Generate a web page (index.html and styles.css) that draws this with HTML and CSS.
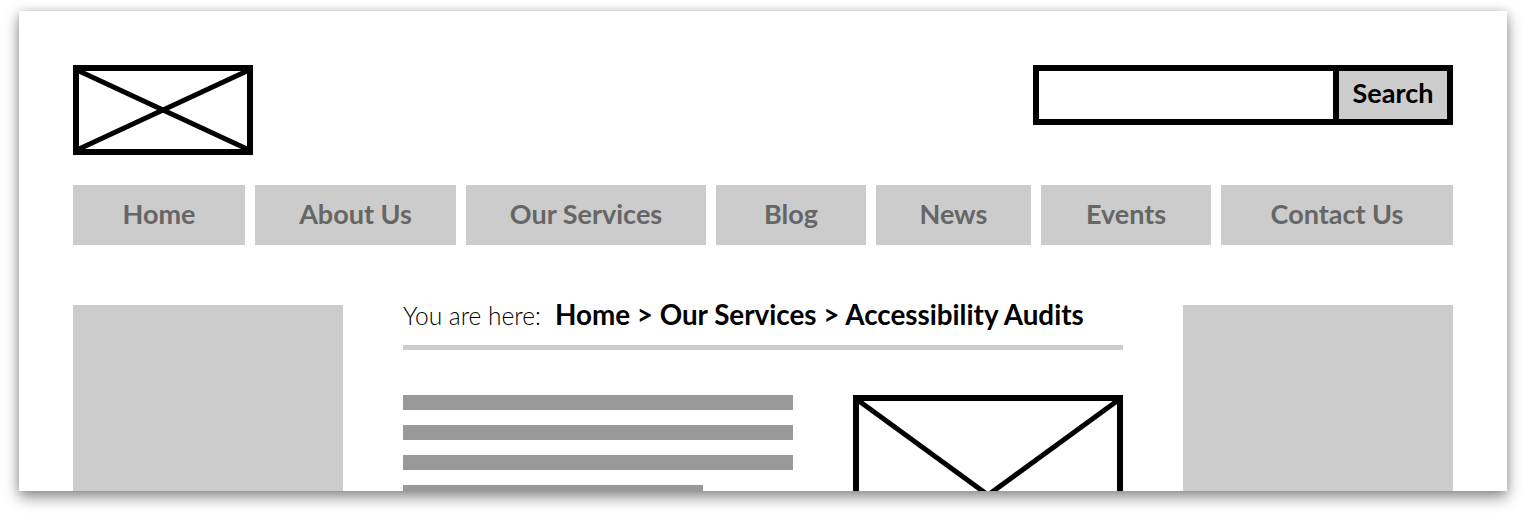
FILE: index.html
```html
<!DOCTYPE html>
<html lang="en">
<head>
<meta charset="utf-8">
<title>Wireframe</title>
<link rel="stylesheet" href="styles.css">
</head>
<body>
<div class="page">
  <div class="panel">
    <header class="header">
      <svg class="logo" width="180" height="90" viewBox="0 0 180 90" aria-label="Logo">
        <rect x="3" y="3" width="174" height="84" fill="#fff" stroke="#000" stroke-width="6"/>
        <line x1="6" y1="6" x2="174" y2="84" stroke="#000" stroke-width="5"/>
        <line x1="174" y1="6" x2="6" y2="84" stroke="#000" stroke-width="5"/>
      </svg>
      <form class="search">
        <div class="search-input"></div>
        <div class="search-btn">Search</div>
      </form>
    </header>
    <nav class="nav">
      <div class="nav-item">Home</div>
      <div class="nav-item">About Us</div>
      <div class="nav-item">Our Services</div>
      <div class="nav-item">Blog</div>
      <div class="nav-item">News</div>
      <div class="nav-item">Events</div>
      <div class="nav-item">Contact Us</div>
    </nav>
    <div class="main">
      <aside class="sidebar"></aside>
      <section class="content">
        <div class="crumbs"><span class="crumbs-label">You are here:</span><span class="crumbs-path">Home &gt; Our Services &gt; Accessibility Audits</span></div>
        <div class="body-row">
          <div class="lines">
            <div class="line"></div>
            <div class="line"></div>
            <div class="line"></div>
            <div class="line short"></div>
            <div class="line"></div>
          </div>
          <svg class="picture" width="270" height="200" viewBox="0 0 270 200" aria-label="Image">
            <rect x="3" y="3" width="264" height="194" fill="#fff" stroke="#000" stroke-width="6"/>
            <line x1="6" y1="6" x2="264" y2="194" stroke="#000" stroke-width="5"/>
            <line x1="264" y1="6" x2="6" y2="194" stroke="#000" stroke-width="5"/>
          </svg>
        </div>
      </section>
      <aside class="sidebar"></aside>
    </div>
  </div>
</div>
</body>
</html>
```
FILE: styles.css
```css
* { box-sizing: border-box; }
html, body { margin: 0; padding: 0; background: #fff; }
body { font-family: "Lato", "Liberation Sans", sans-serif; overflow: hidden; }
.page { padding: 11px 19px 0; height: 518px; }
.panel {
  width: 1488px;
  height: 480px;
  background: #fff;
  overflow: hidden;
  padding: 54px 54px 0;
  box-shadow: 0 6px 14px rgba(0,0,0,0.45), 0 0 8px rgba(0,0,0,0.12);
}
.header { display: flex; justify-content: space-between; align-items: flex-start; }
.logo { display: block; }
.search {
  display: flex;
  width: 420px;
  height: 60px;
  border: 6px solid #000;
  margin: 0;
}
.search-input { flex: 1; background: #fff; border-right: 6px solid #000; }
.search-btn {
  width: 108px;
  background: #ccc;
  display: flex;
  align-items: center;
  justify-content: center;
  padding-bottom: 5px;
  font-weight: 700;
  font-size: 27px;
  color: #000;
}
.nav {
  margin-top: 30px;
  display: grid;
  grid-template-columns: 172fr 201fr 240fr 150fr 155fr 170fr 232fr;
  gap: 10px;
}
.nav-item {
  height: 60px;
  background: #ccc;
  color: #666;
  font-weight: 700;
  font-size: 27px;
  display: flex;
  align-items: center;
  justify-content: center;
  padding-bottom: 3px;
}
.main {
  margin-top: 60px;
  display: grid;
  grid-template-columns: 270px 720px 270px;
  gap: 60px;
}
.sidebar { background: #ccc; height: 400px; }
.crumbs {
  height: 45px;
  border-bottom: 5px solid #ccc;
  font-size: 26px;
  line-height: 20px;
  color: #000;
  white-space: nowrap;
}
.crumbs-label { font-weight: 300; font-size: 24.5px; margin-right: 14px; }
.crumbs-path { font-weight: 700; font-size: 27.8px; }
.body-row { margin-top: 45px; display: flex; gap: 60px; align-items: flex-start; }
.lines { width: 390px; display: flex; flex-direction: column; gap: 15px; }
.line { height: 15px; background: #999; }
.line.short { width: 300px; }
.picture { display: block; }
```
